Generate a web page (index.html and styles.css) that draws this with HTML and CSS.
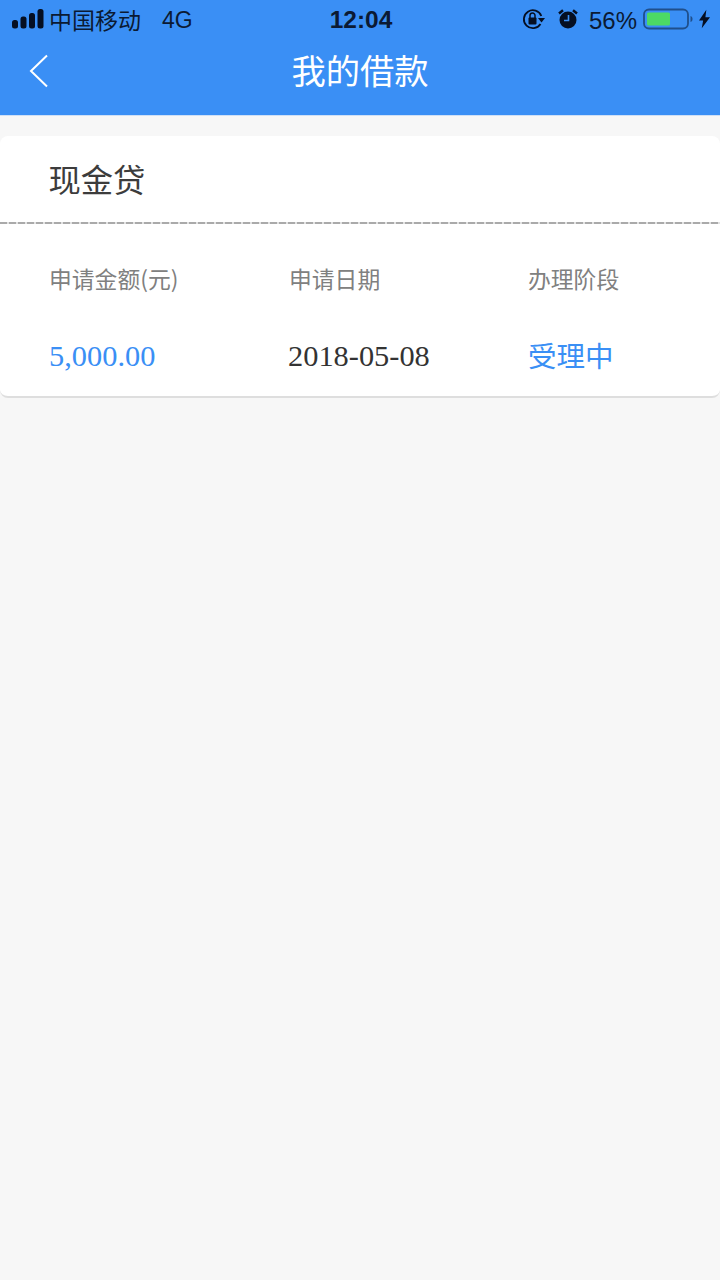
FILE: index.html
```html
<!DOCTYPE html>
<html lang="zh-CN">

<head>
    <meta charset="UTF-8">
    <meta name="viewport" content="width=device-width, initial-scale=1.0">
    <title>我的借款</title>

    <link rel="stylesheet" href="styles.css">
</head>

<body>
    <header class="top">
        <div class="status">
            <div class="status-left">
                <svg class="signal" width="32" height="20" viewBox="0 0 32 20">
                    <rect x="0" y="11" width="6" height="8.500" rx="2.500" fill="#050f22"/>
                    <rect x="8.500" y="7.500" width="6" height="12" rx="2.500" fill="#050f22"/>
                    <rect x="17" y="4" width="6" height="15.500" rx="2.500" fill="#050f22"/>
                    <rect x="25.500" y="0" width="6" height="19.500" rx="2.500" fill="#050f22"/>
                </svg>
                <span class="carrier">中国移动</span>
                <span class="net">4G</span>
            </div>
            <div class="clock">12:04</div>
            <div class="status-right">
                <svg class="lock" width="24" height="22" viewBox="0 0 24 22">
                    <path d="M18.500 16A9 9 0 1 1 19.300 8" fill="none" stroke="#050f22" stroke-width="1.800"/>
                    <path d="M16 10h7l-3.500 4.500z" fill="#050f22"/>
                    <rect x="6.500" y="9.500" width="8" height="7" rx="1" fill="#050f22"/>
                    <path d="M8 10V7.500a2.500 2.500 0 0 1 5 0V10" fill="none" stroke="#050f22" stroke-width="1.500"/>
                </svg>
                <svg class="alarm" width="20" height="20" viewBox="0 0 20 20">
                    <circle cx="10" cy="11" r="8.500" fill="#050f22"/>
                    <path d="M10.500 6v5.500H6" fill="none" stroke="#3a8ff5" stroke-width="1.600"/>
                    <path d="M1 4.500L5 1.200M19 4.500L15 1.200" stroke="#050f22" stroke-width="2.500"/>
                </svg>
                <span class="percent">56%</span>
                <svg class="battery" width="50" height="22" viewBox="0 0 50 22">
                    <rect x="1" y="1.500" width="44" height="19" rx="5" fill="none" stroke="#1f4f8c" stroke-width="1.800"/>
                    <rect x="4" y="4.500" width="23" height="13" rx="1.500" fill="#4cd964"/>
                    <path d="M47.500 8c1.500.5 2 1.500 2 3s-.5 2.500-2 3z" fill="#1f4f8c"/>
                </svg>
                <svg class="bolt" width="11" height="20" viewBox="0 0 12 20">
                    <path d="M8 0L0 11.500h4.500L3 20l9-12H7z" fill="#050f22"/>
                </svg>
            </div>
        </div>
        <div class="nav">
            <svg class="back" width="20" height="34" viewBox="0 0 20 34">
                <path d="M18 1.500L2 17l16 15.500" fill="none" stroke="#fff" stroke-width="2"/>
            </svg>
            <h1 class="nav-title">我的借款</h1>
        </div>
    </header>

    <div class="card">
        <div class="card-head">现金贷</div>
        <div class="dash"></div>
        <div class="grid">
            <div class="label">申请金额(元)</div>
            <div class="label">申请日期</div>
            <div class="label">办理阶段</div>
            <div class="val amount">5,000.00</div>
            <div class="val date">2018-05-08</div>
            <div class="val stage">受理中</div>
        </div>
    </div>
</body>

</html>
```

FILE: styles.css
```css
* {
    box-sizing: border-box;
}

html, body {
    margin: 0;
    height: 100%;
}

body {
    background-color: #f7f7f7;
    font-family: "Noto Sans CJK SC", "Liberation Sans", sans-serif;
}

.top {
    height: 116px;
    background-color: #3a8ff5;
    border-bottom: 1px solid #cfe0f6;
}

.status {
    height: 38px;
    padding: 0 10px 0 12px;
    display: grid;
    grid-template-columns: 1fr auto 1fr;
    align-items: center;
    color: #0b1a33;
    font-family: "Liberation Sans", "Noto Sans CJK SC", sans-serif;
    font-size: 23px;
}

.status-left {
    display: flex;
    align-items: center;
}

.carrier {
    margin-left: 5px;
    font-family: "Noto Sans CJK SC", sans-serif;
    font-size: 23px;
}

.net {
    margin-left: 21px;
    padding-top: 2px;
}

.clock {
    padding-top: 2px;
    font-weight: bold;
    font-size: 24.5px;
}

.status-right {
    display: flex;
    align-items: center;
    justify-content: flex-end;
}

.alarm {
    margin-left: 12px;
}

.percent {
    margin-left: 11px;
    padding-top: 4px;
    font-size: 24px;
}

.battery {
    margin-left: 6px;
}

.bolt {
    margin-left: 6px;
}

.nav {
    height: 66px;
    padding-bottom: 4px;
    display: flex;
    align-items: center;
    justify-content: center;
    position: relative;
}

.back {
    position: absolute;
    left: 29px;
    top: 16px;
}

.nav-title {
    margin: 0;
    color: #fff;
    font-size: 34.3px;
    font-weight: 400;
}

.card {
    margin-top: 20px;
    height: 262px;
    background-color: #fff;
    border-radius: 8px;
    border-bottom: 2px solid #dedede;
}

.card-head {
    height: 86px;
    padding-left: 48.5px;
    padding-bottom: 2px;
    display: flex;
    align-items: center;
    font-size: 32.3px;
    color: #3c3c3c;
}

.dash {
    height: 2px;
    margin-bottom: 1px;
    background: repeating-linear-gradient(90deg, #aaa 0, #aaa 7px, #e2e2e2 7px, #e2e2e2 9px);
}

.grid {
    display: grid;
    grid-template-columns: 240px 239px 1fr;
    grid-template-rows: 50px 68px;
    row-gap: 19px;
    padding: 28px 0 0 49px;
}

.label {
    font-size: 22.8px;
    color: #808080;
    align-self: center;
}

.val {
    align-self: center;
    font-size: 30.4px;
    font-family: "Liberation Serif", "Noto Sans CJK SC", serif;
}

.amount {
    color: #3a8ff5;
}

.date {
    margin-left: -1px;
    color: #333;
}

.stage {
    margin-top: -4px;
    font-family: "Noto Sans CJK SC", sans-serif;
    font-size: 28.5px;
    color: #3a8ff5;
}
```
